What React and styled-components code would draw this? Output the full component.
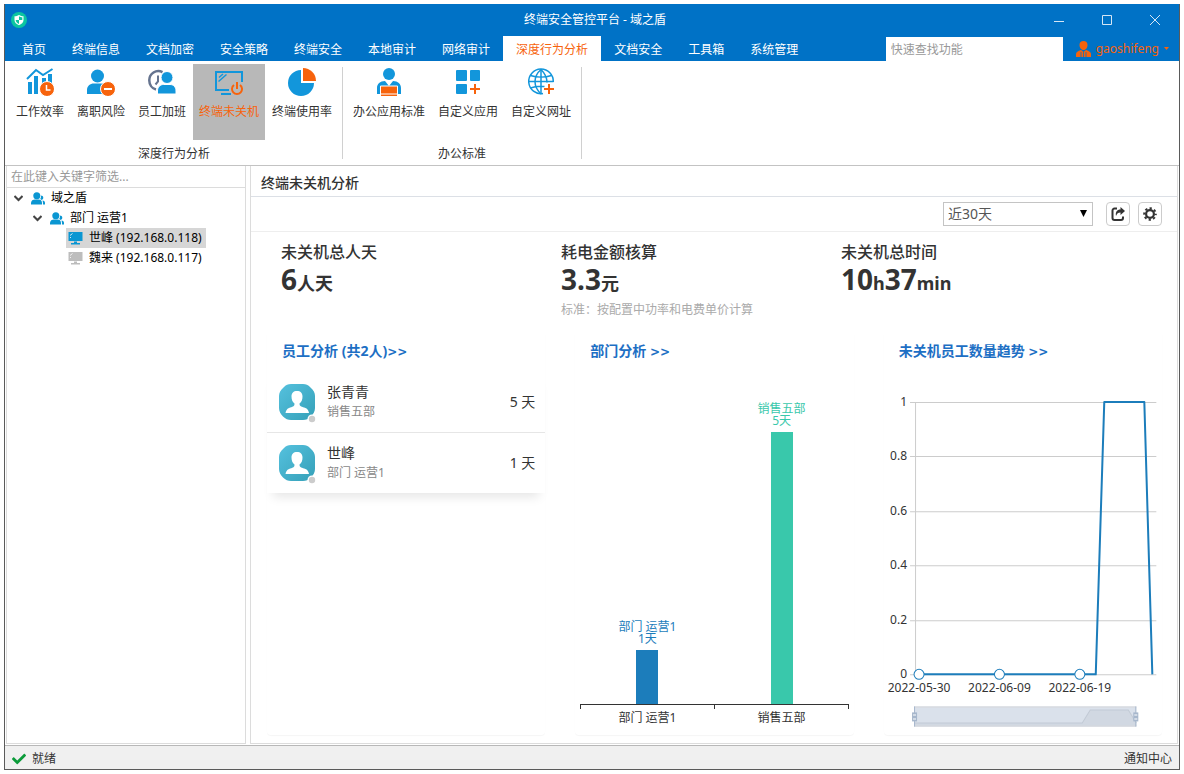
import React from "react";
import styled, { createGlobalStyle } from "styled-components";
import { FaCheck } from "react-icons/fa";

const BLUE = "#0072c6";
const ICON = "#1296db";
const ORANGE = "#f7630c";
const LINE = "#dcdcdc";

const GlobalStyle = createGlobalStyle`
  * {
    box-sizing: border-box;
  }
  body {
    margin: 0;
    padding: 4px;
    background: #fff;
    color: #333;
    font: 12px/20px "Noto Sans", "Noto Sans CJK SC", sans-serif;
  }
  button, input, select {
    font: inherit;
    color: inherit;
    margin: 0;
    padding: 0;
    border: 0;
    background: none;
    border-radius: 0;
  }
  h1, h2, p, ul, dl, dd {
    margin: 0;
    padding: 0;
  }
  ul {
    list-style: none;
  }
  svg {
    display: block;
    flex: none;
  }
`;

const Window = styled.div`
  display: flex;
  flex-direction: column;
  min-height: calc(100vh - 8px);
  border: 1px solid #5a5a5a;
  border-top: 0;
`;

const TitleBar = styled.header`
  display: grid;
  grid-template-columns: 1fr auto 1fr;
  align-items: center;
  height: 32px;
  padding-left: 6px;
  background: ${BLUE};
  color: #fff;
`;

const AppTitle = styled.h1`
  font-size: 12px;
  font-weight: 400;
`;

const WindowButtons = styled.div`
  display: flex;
  justify-content: flex-end;
`;

const WindowButton = styled.button`
  display: grid;
  place-items: center;
  width: 48px;
  height: 32px;
`;

const MenuBar = styled.div`
  display: flex;
  align-items: flex-end;
  height: 25px;
  padding-left: 4px;
  background: ${BLUE};
`;

const Tab = styled.button`
  height: 25px;
  padding: 2px 13px 0;
  white-space: nowrap;
  color: ${props => (props.$active ? ORANGE : "#fff")};
  background: ${props => (props.$active ? "#fff" : "transparent")};
`;

const QuickSearch = styled.input`
  width: 177px;
  height: 24px;
  margin-left: auto;
  padding: 0 5px;
  background: #fff;
  &::placeholder {
    color: #999;
    opacity: 1;
  }
`;

const UserButton = styled.button`
  display: flex;
  align-items: center;
  gap: 5px;
  height: 25px;
  padding: 0 10px 0 13px;
  color: ${ORANGE};
`;

const Ribbon = styled.div`
  display: flex;
  height: 105px;
  padding: 3px 5px;
  border-bottom: 1px solid #c3c3c3;
`;

const Group = styled.section`
  padding-right: 5px;
  margin-right: 4px;
  position: relative;
  &::after {
    content: "";
    position: absolute;
    right: 0;
    top: 3px;
    height: 92px;
    border-right: 1px solid #d0d0d0;
  }
`;

const GroupTools = styled.div`
  display: flex;
  gap: 1px;
`;

const GroupName = styled.h2`
  margin-top: 4px;
  font-size: 12px;
  font-weight: 400;
  text-align: center;
`;

const Tool = styled.button`
  display: flex;
  flex-direction: column;
  align-items: center;
  gap: 6px;
  height: 76px;
  padding: 4px 6px;
  white-space: nowrap;
  color: ${props => (props.$active ? ORANGE : "#333")};
  background: ${props => (props.$active ? "#b8b8b8" : "transparent")};
`;

const Workspace = styled.div`
  display: flex;
  flex: 1;
  gap: 4px;
  padding: 0 1px 1px;
`;

const Sidebar = styled.aside`
  width: 240px;
  border: 1px solid ${LINE};
  border-top: 0;
`;

const FilterInput = styled.input`
  display: block;
  width: 100%;
  height: 22px;
  padding: 0 4px;
  border-bottom: 1px solid ${LINE};
  &::placeholder {
    color: #999;
    opacity: 1;
  }
`;

const TreeRow = styled.li`
  display: flex;
  padding-left: ${props => props.$indent}px;
  color: #000;
`;

const TreeItem = styled.button`
  display: flex;
  align-items: center;
  gap: 6px;
  height: 20px;
  padding: 0 4px 0 2px;
  white-space: nowrap;
  background: ${props => (props.$selected ? "#d6d6d6" : "transparent")};
`;

const Main = styled.main`
  display: flex;
  flex-direction: column;
  flex: 1;
  min-width: 0;
  border: 1px solid ${LINE};
  border-top: 0;
`;

const PageTitle = styled.h2`
  height: 31px;
  padding: 0 10px;
  border-bottom: 1px solid #dce0e6;
  font-size: 14px;
  font-weight: 500;
  line-height: 34px;
`;

const Toolbar = styled.div`
  display: flex;
  justify-content: flex-end;
  align-items: center;
  gap: 8px;
  height: 35px;
  padding: 0 15px;
  border-bottom: 1px solid #eee;
`;

const SelectBox = styled.label`
  position: relative;
  margin-right: 5px;
  svg {
    position: absolute;
    right: 6px;
    top: 8px;
    pointer-events: none;
  }
`;

const RangeSelect = styled.select`
  display: block;
  appearance: none;
  width: 150px;
  height: 24px;
  padding: 0 4px;
  border: 1px solid #c4c4c4;
  background: #fff;
  font-size: 14px;
  color: #555;
`;

const IconButton = styled.button`
  display: grid;
  place-items: center;
  width: 24px;
  height: 24px;
  border: 1px solid #ccc;
  border-radius: 4px;
`;

const Stats = styled.dl`
  display: grid;
  grid-template-columns: repeat(3, 1fr);
  height: 98px;
  padding: 8px 56px 0 30px;
`;

const StatName = styled.dt`
  font-size: 16px;
  line-height: 24px;
  font-weight: 500;
`;

const StatValue = styled.dd`
  font-size: 28px;
  line-height: 30px;
  font-weight: 700;
`;

const Unit = styled.span`
  font-size: 18px;
  line-height: 20px;
`;

const StatNote = styled.dd`
  margin-top: 6px;
  color: #aaa;
`;

const Cards = styled.div`
  display: grid;
  grid-template-columns: repeat(3, minmax(0, 1fr));
  gap: 30px;
  flex: 1;
  padding: 0 15px 8px 16px;
`;

const Card = styled.section`
  display: flex;
  flex-direction: column;
  padding-top: 11px;
  border-radius: 4px;
  box-shadow: 0 1px 1px rgba(0, 0, 0, 0.04);
`;

const CardLink = styled.a`
  height: 20px;
  padding: 0 15px;
  margin-bottom: 10px;
  color: #1d6fc4;
  font-size: 14px;
  font-weight: 700;
  text-decoration: none;
`;

const Arrows = styled.span`
  font: 700 12px/20px "DejaVu Sans", sans-serif;
`;

const StaffList = styled.ul`
  box-shadow: 0 10px 10px -6px rgba(0, 0, 0, 0.1);
`;

const Staff = styled.li`
  display: flex;
  align-items: center;
  gap: 12px;
  height: 61px;
  padding: 0 10px 0 12px;
  font-size: 14px;
  & + & {
    border-top: 1px solid #e6e6e6;
  }
`;

const StaffInfo = styled.div`
  flex: 1;
`;

const Department = styled.p`
  font-size: 12px;
  color: #888;
`;

const BarPlot = styled.div`
  display: flex;
  flex: 1;
  align-items: flex-end;
  margin: 0 5px;
`;

const BarColumn = styled.div`
  display: flex;
  flex: 1;
  flex-direction: column;
  align-items: center;
  color: ${props => props.$color};
  line-height: 12px;
  text-align: center;
`;

const Bar = styled.div`
  width: 22px;
  margin-top: 5px;
  background: currentColor;
`;

const BarAxis = styled.div`
  display: flex;
  height: 31px;
  margin: 0 5px;
  border-top: 1px solid #333;
  background:
    linear-gradient(#333, #333) left top / 1px 4px no-repeat,
    linear-gradient(#333, #333) center top / 1px 4px no-repeat,
    linear-gradient(#333, #333) right top / 1px 4px no-repeat;
`;

const BarName = styled.span`
  flex: 1;
  padding-top: 3px;
  text-align: center;
`;

const ChartSvg = styled.svg`
  width: 100%;
  height: auto;
  margin-top: auto;
  font-size: 12px;
  fill: #333;
`;

const StatusBar = styled.footer`
  display: flex;
  align-items: center;
  gap: 6px;
  height: 24px;
  padding: 2px 7px 0;
  border-top: 1px solid #b8b8b8;
  background: #f0f0f0;
`;

const NoticeButton = styled.button`
  margin-left: auto;
`;

const Logo = () => (
  <svg width="16" height="16" viewBox="0 0 16 16">
    <circle cx="8" cy="8" r="8" fill="#0cc5a0" />
    <path d="M8 3c1.500 1 3 1.200 4.500 1.200v3.800c0 2.500-2 4.200-4.500 5.200-2.500-1-4.500-2.700-4.500-5.200V4.200C5 4.200 6.500 4 8 3z" fill="#fff" />
    <path d="M8 4.300V8h3.300V5.300C10 5.200 9 5 8 4.300zM8 8H4.700c0 1.800 1.300 3 3.300 3.900z" fill="#0cc5a0" />
  </svg>
);

const EfficiencyIcon = () => (
  <svg width="28" height="28" viewBox="0 0 28 28" fill={ICON}>
    <path d="M1 11L10 2l7 5L26.500 1" fill="none" stroke={ICON} strokeWidth="2" />
    <path d="M2 14h4v12H2zM8 8h4v18H8zM16 10h4v16h-4zM22 6h4v14h-4z" />
    <circle cx="21" cy="21" r="7.500" fill={ORANGE} stroke="#fff" />
    <path d="M20.500 17v5h4" fill="none" stroke="#fff" strokeWidth="1.500" />
  </svg>
);

const ResignIcon = () => (
  <svg width="28" height="28" viewBox="0 0 28 28" fill={ICON}>
    <circle cx="10.500" cy="8" r="6.500" />
    <path d="M0 26v-4c0-4 3-6.500 7-6.500h7c3 0 5 1.500 6 4V26z" />
    <circle cx="21" cy="21" r="7.500" fill={ORANGE} stroke="#fff" />
    <path d="M17 20h8v2h-8z" fill="#fff" />
  </svg>
);

const OvertimeIcon = () => (
  <svg width="28" height="28" viewBox="0 0 28 28">
    <path d="M14.500 4.200A9 9 0 0 0 1.300 12.500c0 4 2.500 7.800 6.700 9" fill="none" stroke="#66748f" strokeWidth="2.500" />
    <path d="M10 7.500v6l-2.500 3" fill="none" stroke="#66748f" strokeWidth="2" />
    <circle cx="19" cy="9.500" r="6" fill={ICON} stroke="#fff" />
    <path d="M9.500 26v-3c0-4 2.500-6.500 6-6.500h6.500c3.500 0 6 2.500 6 6.500v3z" fill={ICON} stroke="#fff" />
  </svg>
);

const PowerScreenIcon = () => (
  <svg width="28" height="28" viewBox="0 0 28 28" fill="none" stroke={ICON} strokeWidth="2">
    <path d="M14 22H1V4h26v10" />
    <path d="M6 26h10" />
    <path d="M3.500 13.500l8-7M4 9.500L8 6" strokeWidth="1.500" />
    <path d="M19 17a5 5 0 1 0 6 0M22 14v7" stroke={ORANGE} strokeWidth="2" />
  </svg>
);

const UsageIcon = () => (
  <svg width="28" height="28" viewBox="0 0 28 28">
    <path d="M13 2v13h13A13 13 0 1 1 13 2z" fill={ICON} />
    <path d="M15 0a13 13 0 0 1 13 13H15z" fill={ORANGE} />
  </svg>
);

const OfficeIcon = () => (
  <svg width="28" height="28" viewBox="0 0 28 28" fill={ICON}>
    <circle cx="14" cy="6" r="6" />
    <path d="M2 26v-6c0-4 3-7 8-7l4 5 4-5c5 0 8 3 8 7v6z" />
    <path d="M5.500 18h17v8h-17z" fill={ORANGE} stroke="#fff" />
    <path d="M6 26.500h16V28H6z" fill={ORANGE} />
  </svg>
);

const CustomAppIcon = () => (
  <svg width="28" height="28" viewBox="0 0 28 28" fill={ICON}>
    <rect x="2" y="2" width="11" height="11" rx="1" />
    <rect x="16" y="2" width="10" height="11" rx="1" />
    <rect x="2" y="16" width="11" height="10" rx="1" />
    <path d="M16 21h10M21 16v10" stroke={ORANGE} strokeWidth="2" />
  </svg>
);

const CustomUrlIcon = () => (
  <svg width="28" height="28" viewBox="0 0 28 28" fill="none" stroke={ICON} strokeWidth="1.500">
    <path d="M16 25.500A12.300 12.300 0 1 1 26.300 14" />
    <path d="M14 1v25M1 13.500h25.500M3.500 7.500c6 2 15 2 21 0M3.500 20c4-1.500 9-2 14-1.500" />
    <path d="M14 1.500c-8 7-8 17 0 24.500M14 1.500c4 4 6 8 6 13" />
    <path d="M17 21h10M22 16v10" stroke={ORANGE} strokeWidth="2" />
  </svg>
);

const UserIcon = () => (
  <svg width="15" height="16" viewBox="0 0 15 16" fill={ORANGE}>
    <path d="M7.500 0c2.500 0 4 1.500 4 4s-1.500 5-4 5-4-2.500-4-5 1.500-4 4-4z" />
    <path d="M0 16v-3c0-2 2-3 5-4l2.500 2L10 9c3 1 5 2 5 4v3z" />
    <path d="M5 11v5M10 11v5M7.500 11v5" stroke={BLUE} strokeWidth=".8" />
  </svg>
);

const Chevron = () => (
  <svg width="9" height="20" viewBox="0 0 9 20">
    <path d="M.5 8l4 4 4-4" fill="none" stroke="#444" strokeWidth="2" />
  </svg>
);

const GroupIcon = () => (
  <svg width="14" height="13" viewBox="0 0 14 13" fill="#0a96d2">
    <circle cx="5.800" cy="3.700" r="3.500" />
    <path d="M0 12.500V11c0-2.500 2-3.500 4-3.500h3.500c2 0 3.500 1 3.500 3.500v1.500z" />
    <path d="M9.800 3.500c1.500 0 2.500.800 2.500 2.200 0 1-.6 1.800-1.500 2.300L9.200 7c.8-1 1-2.200.6-3.500zM11.500 8.500c1.600.2 2.500 1 2.500 2.500v1.500h-2c0-1.500 0-2.800-.5-4z" />
  </svg>
);

const ComputerIcon = ({ color }) => (
  <svg width="15" height="13" viewBox="0 0 15 13" fill={color}>
    <path d="M.5 0h14v9H.5zM6 9.500h3v1.500H6zM3 11h9v1.500H3z" />
    <path d="M2 3.500l2.500-2M2 6l1-1" stroke="#fff" strokeWidth="1" opacity=".8" />
  </svg>
);

const ExportIcon = () => (
  <svg width="14" height="14" viewBox="0 0 14 14">
    <path d="M6 1.500H3.500a2 2 0 0 0-2 2V11a2 2 0 0 0 2 2H10a2 2 0 0 0 2-2V9.500" fill="none" stroke="#333" strokeWidth="2" />
    <path d="M9.500 0L14 4 9.500 8V5.500C7 5.500 6 6.500 5 9c-.8-4 1-6.500 4.500-6.500z" fill="#333" />
  </svg>
);

const GearIcon = () => (
  <svg width="14" height="14" viewBox="0 0 14 14" fill="none" stroke="#333">
    <circle cx="7" cy="7" r="3.900" strokeWidth="2.200" />
    <circle cx="7" cy="7" r="5.800" strokeWidth="2" strokeDasharray="2.300 2.255" strokeDashoffset="1.150" />
  </svg>
);

const Avatar = () => (
  <svg width="36" height="36" viewBox="0 0 36 36" overflow="visible">
    <defs>
      <linearGradient id="avatarFill" x1="0" y1="0" x2="1" y2="1">
        <stop offset="0" stopColor="#55c1de" />
        <stop offset="1" stopColor="#35a0b8" />
      </linearGradient>
    </defs>
    <path d="M12 0h12c3 0 5 .8 7.500 3.500C34.500 6 36 9 36 12v12c0 3-1.500 6-4 8.500C29.500 35 27 36 24 36H12c-3 0-5.500-1-8-3.500S0 27 0 24V12c0-3 1.500-6 4.500-8.500C7 .8 9 0 12 0z" fill="url(#avatarFill)" />
    <path d="M18 7c3.500 0 5.500 2 5.500 5.500 0 3.500-1 5.500-3 7 0 3.500 2.500 3 6 4.500 2.200 1 3 2.500 3.500 5H6.500c.5-2.500 1.300-4 3.500-5 3.500-1.500 5.500-1 5.500-4.500-2-1.500-3-3.500-3-7C12.500 9 14.500 7 18 7z" fill="#fff" />
    <circle cx="33" cy="35" r="4.500" fill="#fff" />
    <circle cx="33" cy="35" r="3.200" fill="#ccc" />
  </svg>
);

const tabs = [
  "首页", "终端信息", "文档加密", "安全策略", "终端安全", "本地审计",
  "网络审计", "深度行为分析", "文档安全", "工具箱", "系统管理",
];

const groups = [
  {
    name: "深度行为分析",
    tools: [
      ["工作效率", EfficiencyIcon],
      ["离职风险", ResignIcon],
      ["员工加班", OvertimeIcon],
      ["终端未关机", PowerScreenIcon],
      ["终端使用率", UsageIcon],
    ],
  },
  {
    name: "办公标准",
    tools: [
      ["办公应用标准", OfficeIcon],
      ["自定义应用", CustomAppIcon],
      ["自定义网址", CustomUrlIcon],
    ],
  },
];

const staff = [
  { name: "张青青", department: "销售五部", days: 5 },
  { name: "世峰", department: "部门 运营1", days: 1 },
];

const departments = [
  { name: "部门 运营1", days: 1, color: "#1c7dbb" },
  { name: "销售五部", days: 5, color: "#39c8ab" },
];

const DAY_HEIGHT = 272 / 5;

const TrendChart = () => {
  const ticks = [1, 0.8, 0.6, 0.4, 0.2, 0];
  const dates = ["2022-05-30", "2022-06-09", "2022-06-19"];
  const y = value => Math.round(290 - value * 272);
  return (
    <ChartSvg viewBox="0 0 278 351" role="img" aria-label="未关机员工数量趋势">
      {ticks.map(tick => (
        <g key={tick}>
          <path d={`M26 ${y(tick) + 0.5}H272`} stroke="#ccc" />
          <text x="23" y={y(tick) + 4} textAnchor="end">{tick}</text>
        </g>
      ))}
      <path d="M31.500 18v272" stroke="#ccc" />
      <path d="M35 290H211.500L220 18H260L268 290" fill="none" stroke="#1c7dbb" strokeWidth="2" strokeLinejoin="round" />
      {dates.map((date, i) => (
        <g key={date}>
          <circle cx={35 + i * 80.300} cy="290" r="5" fill="#fff" stroke="#1c7dbb" />
          <text x={35 + i * 80.300} y="308" textAnchor="middle">{date}</text>
        </g>
      ))}
      <rect x="30" y="322" width="222" height="20" fill="#dae1eb" />
      <path d="M30 342v-3.500h168l8-13h38l8 13V342z" fill="#d1d8e2" />
      <path d="M30 338.500h168l8-13h38l8 13" fill="none" stroke="#c2cad5" />
      <path d="M30 322.500h222M30 341.500h222" stroke="#d5d8dc" />
      {[30, 251].map(x => (
        <g key={x} stroke="#a7b7cc">
          <path d={`M${x + 0.5} 322v20`} />
          <rect x={x - 2} y="328" width="5" height="9" fill="#a7b7cc" stroke="none" />
          <path d={`M${x - 1} 330.500h3M${x - 1} 334.500h3`} stroke="#fff" />
        </g>
      ))}
    </ChartSvg>
  );
};

const App = () => (
  <>
    <GlobalStyle />
    <Window>
      <TitleBar>
        <Logo />
        <AppTitle>终端安全管控平台 - 域之盾</AppTitle>
        <WindowButtons>
          <WindowButton aria-label="最小化">
            <svg width="10" height="10" stroke="#d5e6f5"><path d="M0 6.500h10" /></svg>
          </WindowButton>
          <WindowButton aria-label="最大化">
            <svg width="10" height="10" fill="none" stroke="#d5e6f5"><path d="M.5.500h9v9h-9z" /></svg>
          </WindowButton>
          <WindowButton aria-label="关闭">
            <svg width="10" height="10" stroke="#d5e6f5"><path d="M0 0l10 10M10 0L0 10" /></svg>
          </WindowButton>
        </WindowButtons>
      </TitleBar>
      <MenuBar>
        {tabs.map(tab => (
          <Tab key={tab} $active={tab === "深度行为分析"}>{tab}</Tab>
        ))}
        <QuickSearch placeholder="快速查找功能" aria-label="快速查找功能" />
        <UserButton>
          <UserIcon />
          gaoshifeng
          <svg width="5" height="3" fill={ORANGE}><path d="M0 0h5L2.500 3z" /></svg>
        </UserButton>
      </MenuBar>
      <Ribbon>
        {groups.map(group => (
          <Group key={group.name}>
            <GroupTools>
              {group.tools.map(([label, Icon]) => (
                <Tool key={label} $active={label === "终端未关机"}>
                  <Icon />
                  {label}
                </Tool>
              ))}
            </GroupTools>
            <GroupName>{group.name}</GroupName>
          </Group>
        ))}
      </Ribbon>
      <Workspace>
        <Sidebar>
          <FilterInput placeholder="在此键入关键字筛选..." aria-label="关键字筛选" />
          <ul>
            <TreeRow $indent={7}>
              <Chevron />
              <TreeItem><span /><GroupIcon />域之盾</TreeItem>
            </TreeRow>
            <TreeRow $indent={26}>
              <Chevron />
              <TreeItem><span /><GroupIcon />部门 运营1</TreeItem>
            </TreeRow>
            <TreeRow $indent={59}>
              <TreeItem $selected><ComputerIcon color="#0a96d2" />世峰 (192.168.0.118)</TreeItem>
            </TreeRow>
            <TreeRow $indent={59}>
              <TreeItem><ComputerIcon color="#bdbdbd" />魏来 (192.168.0.117)</TreeItem>
            </TreeRow>
          </ul>
        </Sidebar>
        <Main>
          <PageTitle>终端未关机分析</PageTitle>
          <Toolbar>
            <SelectBox>
              <RangeSelect aria-label="时间范围">
                <option>近30天</option>
              </RangeSelect>
              <svg width="7" height="7"><path d="M0 0h7L3.500 7z" /></svg>
            </SelectBox>
            <IconButton aria-label="导出"><ExportIcon /></IconButton>
            <IconButton aria-label="设置"><GearIcon /></IconButton>
          </Toolbar>
          <Stats>
            <div>
              <StatName>未关机总人天</StatName>
              <StatValue>6<Unit>人天</Unit></StatValue>
            </div>
            <div>
              <StatName>耗电金额核算</StatName>
              <StatValue>3.3<Unit>元</Unit></StatValue>
              <StatNote>标准：按配置中功率和电费单价计算</StatNote>
            </div>
            <div>
              <StatName>未关机总时间</StatName>
              <StatValue>10<Unit>h</Unit>37<Unit>min</Unit></StatValue>
            </div>
          </Stats>
          <Cards>
            <Card>
              <CardLink href="#staff">员工分析 (共2人)<Arrows>&gt;&gt;</Arrows></CardLink>
              <StaffList>
                {staff.map(person => (
                  <Staff key={person.name}>
                    <Avatar />
                    <StaffInfo>
                      <p>{person.name}</p>
                      <Department>{person.department}</Department>
                    </StaffInfo>
                    <span>{person.days} 天</span>
                  </Staff>
                ))}
              </StaffList>
            </Card>
            <Card>
              <CardLink href="#department">部门分析 <Arrows>&gt;&gt;</Arrows></CardLink>
              <BarPlot>
                {departments.map(item => (
                  <BarColumn key={item.name} $color={item.color}>
                    <span>{item.name}</span>
                    <span>{item.days}天</span>
                    <Bar style={{ height: Math.round(item.days * DAY_HEIGHT) }} />
                  </BarColumn>
                ))}
              </BarPlot>
              <BarAxis>
                {departments.map(item => (
                  <BarName key={item.name}>{item.name}</BarName>
                ))}
              </BarAxis>
            </Card>
            <Card>
              <CardLink href="#trend">未关机员工数量趋势 <Arrows>&gt;&gt;</Arrows></CardLink>
              <TrendChart />
            </Card>
          </Cards>
        </Main>
      </Workspace>
      <StatusBar>
        <FaCheck size={14} color="#0b9b3a" />
        就绪
        <NoticeButton>通知中心</NoticeButton>
      </StatusBar>
    </Window>
  </>
);

export default App;
